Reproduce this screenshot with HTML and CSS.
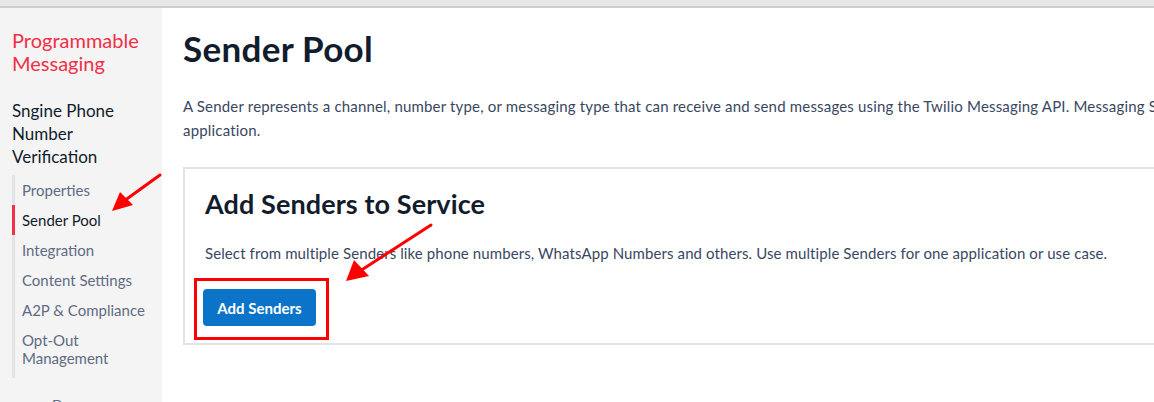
FILE: index.html
```html
<!DOCTYPE html>
<html>
<head>
<meta charset="utf-8">
<link rel="stylesheet" href="styles.css">
</head>
<body>
<div class="topbar"></div>
<div class="layout">
  <aside class="sidebar">
    <div class="product">Programmable Messaging</div>
    <div class="service">Sngine Phone Number Verification</div>
    <ul class="nav">
      <li class="nav-item">Properties</li>
      <li class="nav-item active">Sender Pool</li>
      <li class="nav-item">Integration</li>
      <li class="nav-item">Content Settings</li>
      <li class="nav-item">A2P &amp; Compliance</li>
      <li class="nav-item">Opt-Out Management</li>
    </ul>
    <div class="next">Docs</div>
  </aside>
  <main class="main">
    <h1 class="title">Sender Pool</h1>
    <p class="intro">A Sender represents a channel, number type, or messaging type that can receive and send messages using the Twilio Messaging API. Messaging Services can have multiple Senders for a single<br>application.</p>
    <section class="card">
      <h2 class="card-title">Add Senders to Service</h2>
      <p class="card-text">Select from multiple Senders like phone numbers, WhatsApp Numbers and others. Use multiple Senders for one application or use case.</p>
      <div class="highlight">
        <button class="btn">Add Senders</button>
      </div>
    </section>
  </main>
</div>
<svg class="arrow arrow-one" width="60" height="45" viewBox="0 0 60 45">
  <line x1="56" y1="3" x2="20" y2="29" stroke="#f00" stroke-width="3" stroke-linecap="round"/>
  <polygon points="8,39 16,20 29,33" fill="#f00"/>
</svg>
<svg class="arrow arrow-two" width="100" height="70" viewBox="0 0 100 70">
  <line x1="95" y1="3" x2="24" y2="49" stroke="#f00" stroke-width="3" stroke-linecap="round"/>
  <polygon points="10,59 18,38 33,54" fill="#f00"/>
</svg>
</body>
</html>
```
FILE: styles.css
```css
* { box-sizing: border-box; }
html, body {
  margin: 0;
  padding: 0;
  height: 100%;
  overflow: hidden;
}
body {
  font-family: Lato, "Open Sans", sans-serif;
  background: #fff;
  color: #121c2d;
  position: relative;
}
.topbar {
  height: 8px;
  background: #e6e6e6;
  border-bottom: 2px solid #cfcfcf;
}
.layout {
  display: flex;
  height: calc(100% - 8px);
  overflow: hidden;
}
.sidebar {
  width: 162px;
  flex: none;
  background: #f4f4f4;
  padding: 21px 0 0 12px;
}
.product {
  color: #f22f46;
  font-size: 20px;
  line-height: 23px;
  padding-right: 8px;
}
.service {
  margin-top: 24px;
  font-size: 17px;
  line-height: 23px;
  color: #121c2d;
  padding-right: 20px;
}
.nav {
  list-style: none;
  margin: 7px 0 0 0;
  padding: 0;
  border-left: 3px solid #e1e3e6;
  padding-bottom: 5px;
}
.nav-item {
  font-size: 15px;
  line-height: 18px;
  padding: 6px 8px 6px 7px;
  margin-left: -3px;
  border-left: 3px solid transparent;
  color: #606b85;
}
.nav-item.active {
  border-left-color: #f22f46;
  color: #121c2d;
}
.next {
  margin-top: 18px;
  margin-left: 40px;
  font-size: 14px;
  line-height: 18px;
  color: #606b85;
}
.main {
  flex: 1;
  min-width: 0;
  padding-left: 21px;
}
.title {
  margin: 19px 0 0 0;
  font-size: 35px;
  line-height: 42px;
  font-weight: 700;
  color: #121c2d;
  letter-spacing: 0.3px;
}
.intro {
  margin: 25px 0 0 0;
  width: 1100px;
  font-size: 15px;
  letter-spacing: 0.18px;
  line-height: 24px;
  color: #394762;
  white-space: nowrap;
}
.card {
  margin-top: 25px;
  width: 1100px;
  border: 2px solid #e1e3e6;
  border-right: none;
  padding: 17px 20px 3px 20px;
}
.card-title {
  margin: 0;
  font-size: 27px;
  line-height: 36px;
  font-weight: 700;
  color: #121c2d;
  letter-spacing: 0.1px;
}
.card-text {
  margin: 19px 0 0 0;
  font-size: 15px;
  letter-spacing: 0.1px;
  line-height: 24px;
  color: #394762;
}
.highlight {
  display: inline-block;
  margin: 13px 0 0 -11px;
  border: 3px solid #f00;
  padding: 8px 10px 11px 6px;
}
.btn {
  display: block;
  font-family: Lato, "Open Sans", sans-serif;
  font-size: 15px;
  font-weight: 700;
  color: #fff;
  background: #0b74c8;
  border: none;
  border-radius: 4px;
  height: 37px;
  width: 113px;
  padding: 0;
}
.arrow {
  position: absolute;
}
.arrow-one { left: 104px; top: 172px; }
.arrow-two { left: 336px; top: 222px; }
```
